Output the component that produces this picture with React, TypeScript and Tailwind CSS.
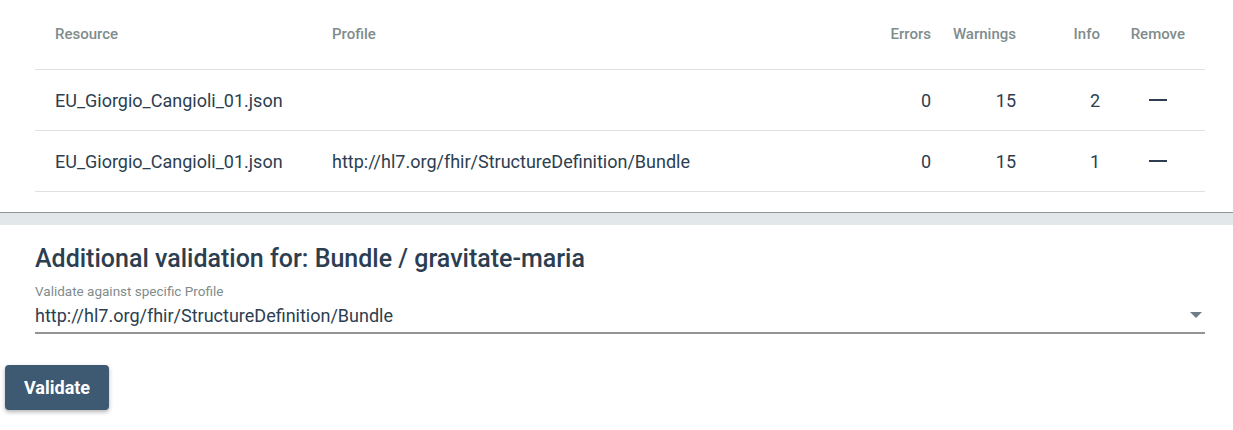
import React from "react";

const rows = [
  { resource: "EU_Giorgio_Cangioli_01.json", profile: "", errors: 0, warnings: 15, info: 2 },
  { resource: "EU_Giorgio_Cangioli_01.json", profile: "http://hl7.org/fhir/StructureDefinition/Bundle", errors: 0, warnings: 15, info: 1 },
];

export default function App() {
  return (
    <div className="w-[1233px] h-[430px] bg-white text-[#2c3e50] overflow-hidden" style={{ fontFamily: "Roboto, 'Noto Sans', sans-serif" }}>
      <div className="pl-[35px] pr-[28px] pb-5">
        <div className="flex h-[70px] items-center border-b border-[#e0e0e0] text-[15px] font-medium text-[#7f8c8d]">
          <div className="w-[297px] pl-5">Resource</div>
          <div className="flex-1">Profile</div>
          <div className="w-[80px] text-right">Errors</div>
          <div className="w-[85px] text-right">Warnings</div>
          <div className="w-[84px] text-right">Info</div>
          <div className="w-[30px]" />
          <div className="w-[55px] text-right whitespace-nowrap">Remove</div>
          <div className="w-5" />
        </div>
        {rows.map((r, i) => (
          <div key={i} className="flex h-[61px] items-center border-b border-[#e0e0e0] text-[18px]">
            <div className="w-[297px] pl-5">{r.resource}</div>
            <div className="flex-1">{r.profile}</div>
            <div className="w-[80px] text-right">{r.errors}</div>
            <div className="w-[85px] text-right">{r.warnings}</div>
            <div className="w-[84px] text-right">{r.info}</div>
            <div className="w-[30px]" />
            <div className="w-[55px] flex justify-center">
              <div className="w-[18px] h-[2px] bg-[#2c3e50]" />
            </div>
            <div className="w-5" />
          </div>
        ))}
      </div>
      <div className="border-t border-[#8e9598] h-[13px] bg-[#e2e7ea]" />
      <div className="pl-[35px] pr-[28px] pt-[20px]">
        <h2 className="text-[25px] font-medium leading-[28px]">Additional validation for: Bundle / gravitate-maria</h2>
        <div className="mt-[11px] text-[13.5px] leading-[14px] text-[#7f8c8d]">Validate against specific Profile</div>
        <div className="flex items-center justify-between border-b-2 border-[#949494] h-[36px]">
          <span className="text-[18px]">http://hl7.org/fhir/StructureDefinition/Bundle</span>
          <svg width="12" height="6" viewBox="0 0 12 6" className="mr-[3px]"><path d="M0 0h12L6 6z" fill="#6f7d86" /></svg>
        </div>
      </div>
      <div className="pl-[5px] pt-[31px]">
        <button className="h-[45px] px-[19px] rounded-[4px] bg-[#3e5a72] text-white text-[18px] font-bold shadow-[0_2px_4px_rgba(0,0,0,0.3)]">Validate</button>
      </div>
    </div>
  );
}
